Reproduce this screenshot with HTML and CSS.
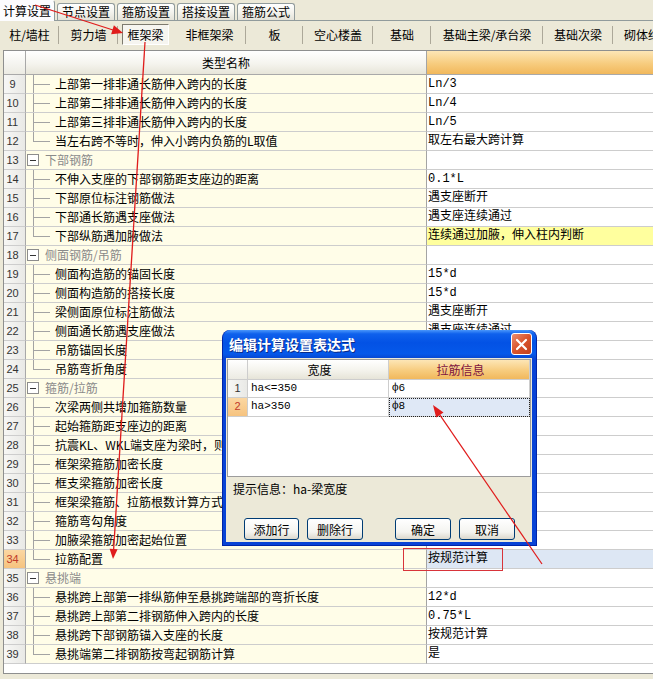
FILE: index.html
```html
<!DOCTYPE html>
<html lang="zh-CN">
<head>
<meta charset="utf-8">
<title>计算设置</title>
<link rel="stylesheet" href="styles.css">
</head>
<body>
<div class="tabs">
  <div class="tab active">计算设置</div>
  <div class="tab">节点设置</div>
  <div class="tab">箍筋设置</div>
  <div class="tab">搭接设置</div>
  <div class="tab">箍筋公式</div>
</div>
<div class="cats">
  <div class="cat w1">柱/墙柱</div>
  <div class="cat w2">剪力墙</div>
  <div class="cat w3 on"><span>框架梁</span></div>
  <div class="cat w4">非框架梁</div>
  <div class="cat w5">板</div>
  <div class="cat w6">空心楼盖</div>
  <div class="cat w7">基础</div>
  <div class="cat w8">基础主梁/承台梁</div>
  <div class="cat w9">基础次梁</div>
  <div class="cat w10">砌体结构</div>
</div>
<div class="sheet">
  <div class="row head"><div class="n"></div><div class="k">类型名称</div><div class="v"></div></div>
  <div class="row"><div class="n">9</div><div class="k t">上部第一排非通长筋伸入跨内的长度</div><div class="v">Ln/3</div></div>
  <div class="row"><div class="n">10</div><div class="k t">上部第二排非通长筋伸入跨内的长度</div><div class="v">Ln/4</div></div>
  <div class="row"><div class="n">11</div><div class="k t">上部第三排非通长筋伸入跨内的长度</div><div class="v">Ln/5</div></div>
  <div class="row"><div class="n">12</div><div class="k t last">当左右跨不等时，伸入小跨内负筋的L取值</div><div class="v">取左右最大跨计算</div></div>
  <div class="row grp"><div class="n">13</div><div class="k"><span class="minus"></span>下部钢筋</div><div class="v"></div></div>
  <div class="row"><div class="n">14</div><div class="k t">不伸入支座的下部钢筋距支座边的距离</div><div class="v">0.1*L</div></div>
  <div class="row"><div class="n">15</div><div class="k t">下部原位标注钢筋做法</div><div class="v">遇支座断开</div></div>
  <div class="row"><div class="n">16</div><div class="k t">下部通长筋遇支座做法</div><div class="v">遇支座连续通过</div></div>
  <div class="row"><div class="n">17</div><div class="k t last">下部纵筋遇加腋做法</div><div class="v hl">连续通过加腋，伸入柱内判断</div></div>
  <div class="row grp"><div class="n">18</div><div class="k"><span class="minus"></span>侧面钢筋/吊筋</div><div class="v"></div></div>
  <div class="row"><div class="n">19</div><div class="k t">侧面构造筋的锚固长度</div><div class="v">15*d</div></div>
  <div class="row"><div class="n">20</div><div class="k t">侧面构造筋的搭接长度</div><div class="v">15*d</div></div>
  <div class="row"><div class="n">21</div><div class="k t">梁侧面原位标注筋做法</div><div class="v">遇支座断开</div></div>
  <div class="row"><div class="n">22</div><div class="k t">侧面通长筋遇支座做法</div><div class="v">遇支座连续通过</div></div>
  <div class="row"><div class="n">23</div><div class="k t">吊筋锚固长度</div><div class="v">20*d</div></div>
  <div class="row"><div class="n">24</div><div class="k t last">吊筋弯折角度</div><div class="v">按规范计算</div></div>
  <div class="row grp"><div class="n">25</div><div class="k"><span class="minus"></span>箍筋/拉筋</div><div class="v"></div></div>
  <div class="row"><div class="n">26</div><div class="k t">次梁两侧共增加箍筋数量</div><div class="v">6</div></div>
  <div class="row"><div class="n">27</div><div class="k t">起始箍筋距支座边的距离</div><div class="v">50</div></div>
  <div class="row"><div class="n">28</div><div class="k t">抗震KL、WKL端支座为梁时，则在该侧按非抗震加密</div><div class="v">是</div></div>
  <div class="row"><div class="n">29</div><div class="k t">框架梁箍筋加密长度</div><div class="v">按规范计算</div></div>
  <div class="row"><div class="n">30</div><div class="k t">框支梁箍筋加密长度</div><div class="v">按规范计算</div></div>
  <div class="row"><div class="n">31</div><div class="k t">框架梁箍筋、拉筋根数计算方式</div><div class="v">向上取整+1</div></div>
  <div class="row"><div class="n">32</div><div class="k t">箍筋弯勾角度</div><div class="v">135°</div></div>
  <div class="row"><div class="n">33</div><div class="k t">加腋梁箍筋加密起始位置</div><div class="v">加腋端部</div></div>
  <div class="row sel"><div class="n">34</div><div class="k t last">拉筋配置</div><div class="v">按规范计算</div></div>
  <div class="row grp"><div class="n">35</div><div class="k"><span class="minus"></span>悬挑端</div><div class="v"></div></div>
  <div class="row"><div class="n">36</div><div class="k t">悬挑跨上部第一排纵筋伸至悬挑跨端部的弯折长度</div><div class="v">12*d</div></div>
  <div class="row"><div class="n">37</div><div class="k t">悬挑跨上部第二排钢筋伸入跨内的长度</div><div class="v">0.75*L</div></div>
  <div class="row"><div class="n">38</div><div class="k t">悬挑跨下部钢筋锚入支座的长度</div><div class="v">按规范计算</div></div>
  <div class="row"><div class="n">39</div><div class="k t last">悬挑端第二排钢筋按弯起钢筋计算</div><div class="v">是</div></div>
</div>

<div class="dlg">
  <div class="dtitle">
    <span>编辑计算设置表达式</span>
    <span class="close"><svg width="13" height="13" viewBox="0 0 13 13"><path d="M2 2 L11 11 M11 2 L2 11" stroke="#fff" stroke-width="2.2" stroke-linecap="round"/></svg></span>
  </div>
  <div class="dbody">
    <div class="dgrid">
      <div class="drow dhead"><div class="dn"></div><div class="dk">宽度</div><div class="dv">拉筋信息</div></div>
      <div class="drow"><div class="dn">1</div><div class="dk">ha&lt;=350</div><div class="dv">ф6</div></div>
      <div class="drow dsel"><div class="dn">2</div><div class="dk">ha&gt;350</div><div class="dv">ф8</div></div>
    </div>
    <div class="hint">提示信息：ha-梁宽度</div>
    <div class="btns">
      <div class="btn">添加行</div>
      <div class="btn wide">删除行</div>
      <div class="btn wide gap">确定</div>
      <div class="btn wide">取消</div>
    </div>
  </div>
</div>

<svg class="marks" width="653" height="679" viewBox="0 0 653 679">
  <line x1="35" y1="5" x2="113" y2="30" stroke="#e01c1c" stroke-width="1.3"/>
  <polygon points="123,33 111.1,34.2 113.9,25.2" fill="#e01c1c"/>
  <line x1="145" y1="42" x2="113.6" y2="550" stroke="#e01c1c" stroke-width="1.3"/>
  <polygon points="113,559 117.6,549.3 109.6,548.7" fill="#e01c1c"/>
  <line x1="542" y1="564" x2="439.8" y2="414.9" stroke="#e01c1c" stroke-width="1.2"/>
  <polygon points="433,405 443.5,412.4 436.1,417.4" fill="#e01c1c"/>
  <rect x="403.5" y="548.5" width="99" height="22" fill="none" stroke="#d8343a" stroke-width="1"/>
</svg>
</body>
</html>
```

FILE: styles.css
```css
body {
  margin: 0;
  width: 653px;
  height: 679px;
  overflow: hidden;
  position: relative;
  background: #ece9d8;
  font: 12px "Noto Sans CJK SC", sans-serif;
  color: #000;
}

/* top tabs */
.tabs {
  display: flex;
  align-items: flex-end;
  height: 20px;
  border-bottom: 1px solid #919b9c;
}
.tab {
  box-sizing: border-box;
  height: 17px;
  padding: 0 4px;
  margin-right: 2px;
  border: 1px solid #919b9c;
  border-bottom: 0;
  border-radius: 3px 3px 0 0;
  background: linear-gradient(#ffffff, #f3f2ec 55%, #e4e2d8);
  line-height: 16px;
  white-space: nowrap;
}
.tab.active {
  height: 21px;
  margin-bottom: -1px;
  padding: 0 3px;
  border-left: 0;
  border-top-color: #fcfcfe;
  border-radius: 0 3px 0 0;
  background: #fcfcfe;
  line-height: 19px;
}

/* category buttons */
.cats {
  display: flex;
  height: 27px;
  overflow: hidden;
}
.cat {
  flex: none;
  display: flex;
  align-items: center;
  justify-content: center;
  white-space: nowrap;
  background: linear-gradient(#aca899, #aca899) right center / 1px 18px no-repeat;
}
.cat.on { background: none; }
.cat.on span {
  box-sizing: border-box;
  height: 21px;
  padding: 0 4px;
  line-height: 19px;
  border: 1px solid;
  border-color: #7d7a6e #ffffff #ffffff #7d7a6e;
  background: #f6f5f0;
}
.w1 { width: 59px; }
.w2 { width: 59px; }
.w3 { width: 55px; }
.w4 { width: 73px; }
.w5 { width: 57px; }
.w6 { width: 70px; }
.w7 { width: 58px; }
.w8 { width: 112px; }
.w9 { width: 70px; }
.w10 { width: 70px; }

/* main sheet */
.sheet {
  margin: 2px 0 0 3px;
  width: 650px;
  height: 624px;
  box-sizing: border-box;
  border: 1px solid #8e8f8f;
  border-right: 0;
  background: #fff;
  overflow: hidden;
}
.row {
  display: grid;
  grid-template-columns: 22px 401px 1fr;
  height: 19px;
}
.row > div {
  box-sizing: border-box;
  border-bottom: 1px solid #cdcdcd;
  line-height: 18px;
  white-space: nowrap;
  overflow: hidden;
}
.n {
  border-right: 1px solid #a8a8a8;
  background: linear-gradient(90deg, #f7f7f5, #e9e9e6);
  text-align: center;
  padding-right: 4px;
  font: 11px "Liberation Sans", sans-serif;
  line-height: 18px;
  color: #333;
}
.k {
  background: #fffde8;
  border-right: 1px solid #a4a4a4;
  padding-left: 29px;
}
.v {
  padding-left: 1px;
  font-family: "Liberation Mono", "Noto Sans CJK SC", monospace;
  font-size: 12px;
}
.v.hl { background: #ffff9e; }

/* tree lines */
.k.t {
  background-color: #fffde8;
  background-image: linear-gradient(#a3a3a3, #a3a3a3), linear-gradient(#a3a3a3, #a3a3a3);
  background-repeat: no-repeat;
  background-size: 1px 100%, 17px 1px;
  background-position: 7px 0, 7px 9px;
}
.k.t.last { background-size: 1px 10px, 17px 1px; }

.grp .k {
  display: flex;
  align-items: center;
  padding-left: 0;
  color: #8a8a8a;
}
.minus {
  box-sizing: border-box;
  width: 12px;
  height: 12px;
  margin: 0 6px 0 1px;
  border: 1px solid #8c8c8c;
  background: linear-gradient(#333, #333) center / 6px 1px no-repeat, #ffffff;
}

.row.head { height: 24px; }
.row.head > div {
  line-height: 23px;
  border-bottom-color: #a9a9a9;
}
.head .n { background: linear-gradient(#ffffff, #ecebe3); }
.head .k {
  padding: 0;
  text-align: center;
  background: linear-gradient(#ffffff, #f5f4ee 55%, #e7e5d9);
}
.head .v { background: linear-gradient(#fde6b6, #f7cc7e 55%, #f1b85c); }

.sel .n {
  background: linear-gradient(#fbd7a2, #f6c37f);
  color: #c0392b;
}
.sel .v { background: #dde7f4; }

/* dialog */
.dlg {
  position: absolute;
  left: 222px;
  top: 330px;
  width: 315px;
  height: 216px;
  box-sizing: border-box;
  padding: 0 4px 3px 3px;
  display: flex;
  flex-direction: column;
  background: #0843d6;
  border: 1px solid #0024a8;
  border-top: 0;
  border-radius: 8px 8px 0 0;
}
.dtitle {
  flex: none;
  height: 28px;
  margin: 0 -4px 0 -3px;
  padding: 0 4px 0 6px;
  display: flex;
  align-items: center;
  justify-content: space-between;
  border-radius: 8px 8px 0 0;
  background: linear-gradient(#4a97fb 0%, #0f61ec 14%, #0352e5 45%, #0558ea 85%, #0748d2 100%);
  color: #fff;
  font-size: 14px;
  font-weight: bold;
  text-shadow: 1px 1px 0 #0a2a88;
}
.close {
  box-sizing: border-box;
  width: 21px;
  height: 22px;
  display: flex;
  align-items: center;
  justify-content: center;
  border: 1px solid #ffffff;
  border-radius: 3px;
  background: linear-gradient(135deg, #eb8e70, #d9532c 50%, #c2401c);
}
.dbody {
  flex: 1;
  display: flex;
  flex-direction: column;
  background: #ece9d8;
}
.dgrid {
  margin: 1px 1px 0;
  height: 118px;
  box-sizing: border-box;
  border: 1px solid #9c9c9c;
  background: #fff;
}
.drow {
  display: grid;
  grid-template-columns: 20px 141px 1fr;
  height: 18px;
}
.drow > div {
  box-sizing: border-box;
  border-bottom: 1px solid #cdcdcd;
  border-right: 1px solid #cdcdcd;
  line-height: 17px;
  white-space: nowrap;
}
.drow.dhead { height: 20px; }
.drow.dhead > div { line-height: 19px; text-align: center; }
.dhead .dn { background: linear-gradient(#ffffff, #ecebe3); }
.dhead .dk { background: linear-gradient(#ffffff, #f4f3ec 55%, #e6e4d8); }
.dhead .dv {
  background: linear-gradient(#fde6b6, #f7cc7e 55%, #f1b85c);
  color: #7c1240;
}
.dn {
  text-align: center;
  background: linear-gradient(90deg, #f7f7f5, #e9e9e6);
  font: 11px "Liberation Sans", sans-serif;
  color: #333;
}
.dk, .dv {
  padding-left: 3px;
  font-family: "Liberation Mono", "Noto Sans CJK SC", monospace;
  font-size: 11px;
}
.dhead .dk, .dhead .dv { font: 12px "Noto Sans CJK SC", sans-serif; line-height: 19px; }
.drow.dsel { height: 19px; }
.dsel .dn {
  background: linear-gradient(#fbd7a2, #f6c37f);
  color: #c0392b;
}
.dsel .dv {
  background: #dfe8f6;
  outline: 1px dotted #222;
  outline-offset: -1px;
}
.hint {
  margin-top: 3px;
  padding-left: 7px;
  line-height: 18px;
}
.btns {
  display: flex;
  margin-top: 20px;
  padding-left: 18px;
}
.btn {
  box-sizing: border-box;
  width: 55px;
  height: 22px;
  margin-right: 8px;
  display: flex;
  align-items: center;
  justify-content: center;
  border: 1px solid #003c74;
  border-radius: 3px;
  background: linear-gradient(#ffffff, #f4f4f0 65%, #dcd8cc);
}
.btn.wide { width: 56px; }
.btn.gap { margin-left: 24px; }

/* annotation overlay */
.marks {
  position: absolute;
  left: 0;
  top: 0;
  pointer-events: none;
}
```
